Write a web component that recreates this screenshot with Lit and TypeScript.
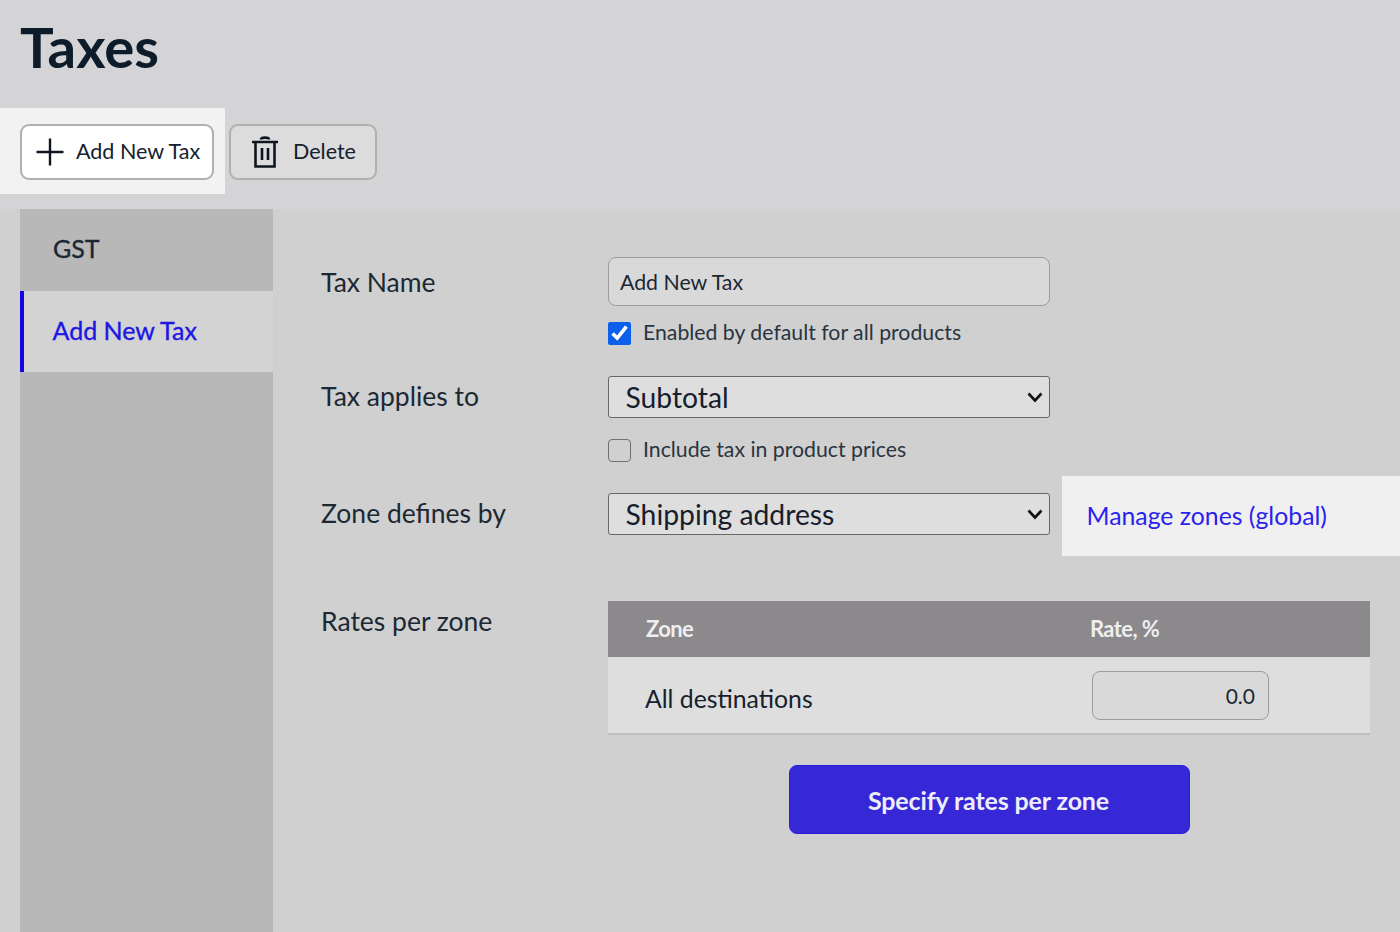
import { LitElement, html, css } from "lit";
import { customElement } from "lit/decorators.js";

@customElement("app-root")
export class AppRoot extends LitElement {
  static styles = css`
    :host { display: block; height: 932px; overflow: hidden; background: #d4d4d6; font-family: Lato, "Open Sans", sans-serif; color: #16202c; }
    h1 { margin: 0; padding: 13px 0 0 20px; height: 108px; box-sizing: border-box; font-size: 56.3px; line-height: 66px; font-weight: 700; color: #0d1c2b; letter-spacing: 0; }
    .toolbar { display: flex; align-items: flex-start; height: 101px; box-sizing: border-box; }
    .spot { background: #f2f2f3; padding: 16px 11px 14px 20px; display: flex; }
    .btn { display: flex; align-items: center; height: 56px; box-sizing: border-box; border: 2px solid #b0b0b0; border-radius: 9px; font-size: 21.5px; color: #14202c; }
    .btn span { position: relative; top: -1px; }
    .add { width: 194px; background: #fff; padding-left: 14px; gap: 12px; }
    .del { width: 148px; margin: 16px 0 0 4px; background: #dcdcdc; padding-left: 19px; gap: 13px; }
    .body { display: flex; height: 723px; background: #d0d0d0; padding-left: 20px; }
    .side { width: 253px; background: #b8b8b8; flex: none; }
    .tab { height: 81.5px; box-sizing: border-box; display: flex; align-items: center; padding-left: 33px; padding-bottom: 3px; font-size: 25px; color: #1b2733; -webkit-text-stroke: 0.35px currentColor; }
    .tab.on { background: #d3d3d3; color: #2016e2; border-left: 4.500px solid #1404e0; padding-left: 28.500px; padding-bottom: 2px; }
    .main { flex: 1; padding: 48px 30px 0 48px; }
    .row { display: flex; }
    .label { width: 287px; flex: none; font-size: 26.5px; line-height: 32px; color: #1c2833; position: relative; top: -1px; }
    .ctl { width: 442px; flex: none; }
    .text { display: block; width: 100%; height: 49px; box-sizing: border-box; background: #d9d9d9; border: 1.5px solid #9c9c9c; border-radius: 8px; padding: 0 11px; font: 21.3px Lato, sans-serif; color: #1b2733; outline: none; }
    .check { display: flex; align-items: center; height: 24px; gap: 12px; font-size: 21.25px; color: #2a3540; }
    .check span { position: relative; top: -1px; }
    .check input { width: 23px; height: 23px; margin: 0; accent-color: #0b5fe8; flex: none; }
    .check input.off { appearance: none; box-sizing: border-box; background: transparent; border: 1.5px solid #707070; border-radius: 4px; }
    .sel { position: relative; }
    select { display: block; width: 100%; height: 42px; box-sizing: border-box; appearance: none; background: #dedede; border: 1.5px solid #686868; border-radius: 3px; padding: 0 0 0 16.500px; font: 28.3px Lato, sans-serif; color: #16202c; }
    .chev { position: absolute; right: 7px; top: 15.500px; pointer-events: none; }
    .link { width: 338px; height: 80px; flex: none; margin: -17px -30px 0 12px; box-sizing: border-box; background: #f0f0f0; color: #2a22ee; font-size: 24.8px; padding: 0 0 2px 24.500px; display: flex; align-items: center; }
    .table { width: 762px; }
    .thead { height: 56px; background: #8b898c; color: #eee; display: flex; align-items: center; font-size: 22px; font-weight: 700; letter-spacing: -0.6px; padding-bottom: 2px; box-sizing: border-box; }
    .tr { height: 78px; background: #dedede; border-bottom: 2px solid #c0c0c0; box-sizing: border-box; display: flex; align-items: center; font-size: 24.8px; color: #16202c; }
    .tr .c1 { position: relative; top: 3px; padding-left: 37px; }
    .c1 { width: 484px; padding-left: 38px; box-sizing: border-box; flex: none; }
    .thead .c1 { width: 482px; }
    .rate { width: 177px; height: 49px; box-sizing: border-box; background: #d9d9d9; border: 1.5px solid #9c9c9c; border-radius: 8px; padding: 0 13px; text-align: right; font: 21px Lato, sans-serif; color: #1b2733; outline: none; }
    .submit { display: block; width: 401px; height: 69px; margin: 30px 0 0 181px; background: #3628d6; border: 1px solid #2a1fe0; border-radius: 8px; padding: 0 2px 0 0; color: #eeeefa; font: 700 25px Lato, sans-serif; letter-spacing: -0.12px; }
    .spacer { width: 287px; flex: none; }
  `;

  chev() {
    return html`<svg class="chev" width="16" height="11" viewBox="0 0 16 11" fill="none" stroke="#111" stroke-width="2.6"><path d="M1.500 1.500L8 8.500L14.500 1.500"/></svg>`;
  }

  render() {
    return html`
      <h1>Taxes</h1>
      <div class="toolbar">
        <div class="spot">
          <div class="btn add">
            <svg width="28" height="28" viewBox="0 0 28 28" fill="none" stroke="#0d1620" stroke-width="2.4"><path d="M14 0.500V27.500M0.500 14H27.500"/></svg>
            <span>Add New Tax</span>
          </div>
        </div>
        <div class="btn del">
          <svg width="30" height="34" viewBox="0 0 30 34" fill="none" stroke="#0d1620" stroke-width="2.6"><path d="M2 7H28M11 4.500C11 2 19 2 19 4.500M5.500 7V31.500H24.500V7M12 13V25M18 13V25"/></svg>
          <span>Delete</span>
        </div>
      </div>
      <div class="body">
        <div class="side">
          <div class="tab">GST</div>
          <div class="tab on">Add New Tax</div>
        </div>
        <div class="main">
          <div class="row" style="height:119px">
            <div class="label" style="padding-top:10px">Tax Name</div>
            <div class="ctl">
              <input class="text" value="Add New Tax" />
              <label class="check" style="margin-top:15px"><input type="checkbox" checked /><span>Enabled by default for all products</span></label>
            </div>
          </div>
          <div class="row" style="height:117px">
            <div class="label" style="padding-top:5px">Tax applies to</div>
            <div class="ctl">
              <div class="sel"><select><option>Subtotal</option></select>${this.chev()}</div>
              <label class="check" style="margin-top:20px"><input class="off" type="checkbox" /><span>Include tax in product prices</span></label>
            </div>
          </div>
          <div class="row" style="height:108px">
            <div class="label" style="padding-top:5px">Zone defines by</div>
            <div class="ctl"><div class="sel"><select><option>Shipping address</option></select>${this.chev()}</div></div>
            <div class="link">Manage zones (global)</div>
          </div>
          <div class="row">
            <div class="label" style="padding-top:5px">Rates per zone</div>
            <div class="table">
              <div class="thead"><div class="c1">Zone</div><div>Rate, %</div></div>
              <div class="tr"><div class="c1">All destinations</div><input class="rate" value="0.0" /></div>
            </div>
          </div>
          <div class="row">
            <div class="spacer"></div>
            <div class="table"><button class="submit">Specify rates per zone</button></div>
          </div>
        </div>
      </div>
    `;
  }
}
